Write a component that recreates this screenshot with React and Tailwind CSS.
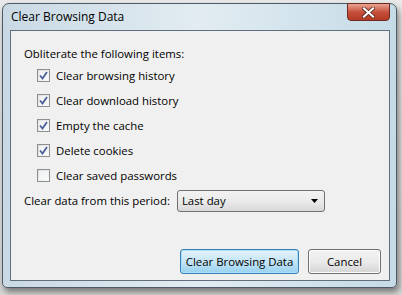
import React from 'react';

const items = [
  { label: 'Clear browsing history', checked: true },
  { label: 'Clear download history', checked: true },
  { label: 'Empty the cache', checked: true },
  { label: 'Delete cookies', checked: true },
  { label: 'Clear saved passwords', checked: false },
];

function CheckBox({ checked }) {
  return (
    <div className="w-[13px] h-[13px] border border-[#8e8f8f] bg-gradient-to-br from-[#dcdcdc] to-[#fbfbfb] flex items-center justify-center">
      <div className="w-[9px] h-[9px] bg-gradient-to-br from-[#eef0f3] to-[#f8f9fa] flex items-center justify-center">
        {checked && (
          <svg width="9" height="9" viewBox="0 0 9 9">
            <path d="M1 4.5 L3.5 7.5 L8 1" fill="none" stroke="#4a5f97" strokeWidth="1.8" />
          </svg>
        )}
      </div>
    </div>
  );
}

export default function App() {
  return (
    <div
      className="w-[402px] h-[295px] bg-gradient-to-b from-[#e9e9e9] to-[#d6d6d6] pt-[3px] pl-[2px] overflow-hidden"
      style={{ fontFamily: '"Open Sans", "Noto Sans", sans-serif' }}
    >
      <div className="relative w-[395px] h-[285px] rounded-t-[7px] rounded-b-[5px] border border-[#505a64] bg-gradient-to-r from-[#c9d9e4] via-[#e2ecf2] to-[#c5dbe6] shadow-[2px_4px_6px_rgba(0,0,0,0.45)] flex flex-col">
        {/* Title bar */}
        <div className="h-[26px] flex items-start justify-between shrink-0">
          <span className="pl-[8px] pt-[5px] text-[12px] leading-[16px] text-black">Clear Browsing Data</span>
          <div className="mr-[6px] mt-[-1px] w-[43px] h-[18px] rounded-b-[4px] border border-[#6d2a22] bg-gradient-to-b from-[#e8a493] via-[#c7503c] to-[#b33a24] flex items-center justify-center">
            <svg width="13" height="11" viewBox="0 0 13 11">
              <path d="M2 1.5 L11 9.5 M11 1.5 L2 9.5" stroke="#4a1a12" strokeWidth="3.6" strokeLinecap="square" />
              <path d="M2 1.5 L11 9.5 M11 1.5 L2 9.5" stroke="#ffffff" strokeWidth="2.2" strokeLinecap="square" />
            </svg>
          </div>
        </div>

        {/* Client area */}
        <div className="ml-[7px] w-[380px] h-[251px] border border-[#5f6f7c] bg-[#f0f0f0] flex flex-col text-[11.4px] text-black">
          <div className="pl-[13px] pt-[15px] leading-[16px]">Obliterate the following items:</div>

          <div className="pl-[26px] pt-[1px] flex flex-col">
            {items.map((item) => (
              <div key={item.label} className="h-[25px] flex items-center gap-[6px]">
                <CheckBox checked={item.checked} />
                <span className="leading-[16px]">{item.label}</span>
              </div>
            ))}
          </div>

          <div className="pl-[13px] mt-[2px] flex items-center gap-[7px]">
            <span className="leading-[16px]">Clear data from this period:</span>
            <div className="w-[148px] h-[22px] rounded-[3px] border border-[#707070] bg-gradient-to-b from-[#f2f2f2] via-[#ebebeb] to-[#d8d8d8] flex items-center justify-between pl-[4px] pr-[6px]">
              <span className="leading-[16px]">Last day</span>
              <svg width="7" height="4" viewBox="0 0 7 4">
                <path d="M0 0 L7 0 L3.5 4 Z" fill="#000" />
              </svg>
            </div>
          </div>

          <div className="mt-auto mb-[6px] pr-[8px] flex justify-end gap-[9px]">
            <button className="w-[119px] h-[25px] rounded-[3px] border border-[#3c7fb1] bg-gradient-to-b from-[#e5f4fc] via-[#c4e5f6] to-[#98d1ef] shadow-[inset_0_0_0_1px_#a6e0fa] text-[11.4px] leading-[16px]">
              Clear Browsing Data
            </button>
            <button className="w-[73px] h-[25px] rounded-[3px] border border-[#707070] bg-gradient-to-b from-[#f2f2f2] via-[#ebebeb] to-[#d4d4d4] shadow-[inset_0_0_0_1px_#fcfcfc] text-[11.4px] leading-[16px]">
              Cancel
            </button>
          </div>
        </div>
      </div>
    </div>
  );
}
